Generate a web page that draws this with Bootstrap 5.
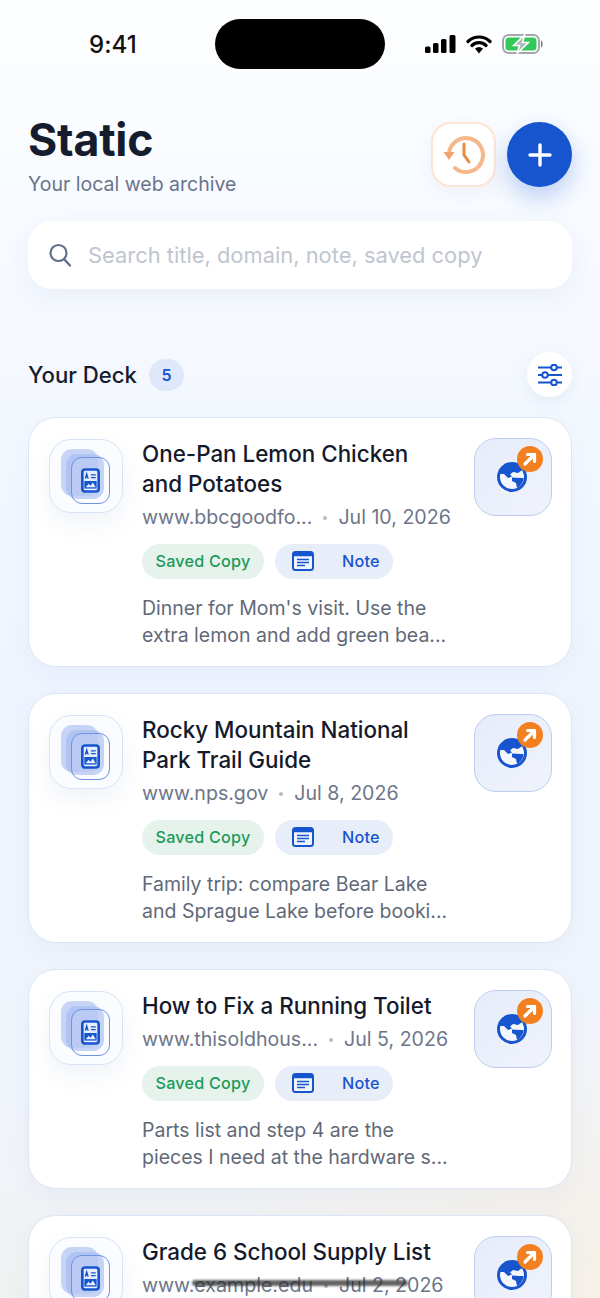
<!DOCTYPE html>
<html lang="en">
<head>
    <meta charset="UTF-8">
    <meta name="viewport" content="width=device-width, initial-scale=1.0">
    <title>Static</title>
    <link href="https://cdn.jsdelivr.net/npm/bootstrap@5.3.0/dist/css/bootstrap.min.css" rel="stylesheet">
    <style>
        html, body { height: 1298px; overflow: hidden; }
        body {
            font-family: Inter, "Liberation Sans", sans-serif;
            color: #141c2e;
            background:
                radial-gradient(420px 300px at 100% 100%, #f6f1e8 0%, rgba(246,241,232,0) 100%),
                linear-gradient(180deg, #fdfeff 0%, #f7faff 18%, #eef4fe 55%, #f0f4fb 85%, #f0f1f1 100%);
        }
        .status-row { height: 88px; padding: 19px 56px 0 89px; }
        .clock { width: 126px; font-size: 24px; font-weight: 500; color: #111; line-height: 51px; letter-spacing: .1px; }
        .island { width: 171px; height: 50px; background: #000; border-radius: 25px; }
        .status-icons { gap: 10px; margin-left: 40px; height: 50px; }
        .page-head { padding: 0 28px; height: 133px; }
        .app-title { font-size: 44.7px; font-weight: 700; line-height: 54px; margin: 25px 0 0; letter-spacing: -.2px; }
        .app-sub { font-size: 19.5px; color: #69748a; line-height: 28px; margin-top: 3px; }
        .head-actions { gap: 11px; margin-top: 34px; }
        .history-btn, .add-btn { width: 65px; height: 65px; padding: 0; }
        .history-btn { background: #fff; border: 2px solid #fbe6d6; border-radius: 20px; box-shadow: 0 6px 18px rgba(60,90,160,.06); }
        .add-btn { background: #1755cf; border: 0; border-radius: 50%; box-shadow: 0 10px 24px rgba(23,85,207,.28); }
        .search-box {
            margin: 0 28px; height: 68px; padding: 0 21px; gap: 17px; background: #fff;
            border-radius: 24px; box-shadow: 0 8px 24px rgba(70,100,170,.07);
        }
        .search-hint { font-size: 21.9px; color: #bfc5d0; }
        .deck-head { padding: 0 28px; margin-top: 63px; height: 45px; }
        .deck-title { font-size: 22.2px; font-weight: 500; margin: 2px 0 0; }
        .deck-count { width: 35px; height: 32px; margin-left: 12px; background: #dfe8fb; color: #1755cf; border-radius: 16px; font-size: 16px; font-weight: 600; }
        .filter-btn { width: 45px; height: 45px; padding: 0; background: #fff; border: 0; border-radius: 50%; box-shadow: 0 6px 16px rgba(70,100,170,.08); }
        .deck-list { padding: 0 28px; margin-top: 20px; gap: 26px; }
        .deck-card {
            flex-direction: row; align-items: flex-start; flex-shrink: 0; padding: 21px 19px 0 20px;
            border: 1.5px solid #dce5f6; border-radius: 28px; background: #fff;
            box-shadow: 0 8px 24px rgba(70,100,170,.05);
        }
        .card-tall { height: 250px; }
        .card-short { height: 220px; }
        .stack-tile {
            position: relative; width: 74px; height: 74px; flex-shrink: 0; background: #fbfcff;
            border: 1.5px solid #d9e2f6; border-radius: 22px; box-shadow: 0 10px 22px rgba(70,100,170,.08);
        }
        .sheet { position: absolute; border-radius: 11px; }
        .sheet-a { left: 11px; top: 9px; width: 37px; height: 47px; background: #c6d4f6; }
        .sheet-b { left: 16px; top: 14px; width: 38px; height: 45px; background: rgba(170,190,240,.75); }
        .sheet-c { left: 21px; top: 17px; width: 39px; height: 47px; border: 1.5px solid #6f93e4; background: rgba(255,255,255,.12); }
        .stack-tile svg { position: absolute; left: 31px; top: 28px; }
        .card-main { width: 312px; margin-left: 19px; margin-top: -.5px; flex-shrink: 0; }
        .item-title { font-size: 22.4px; font-weight: 500; line-height: 30px; margin: 0; color: #141a2b; }
        .item-meta { font-size: 19.6px; line-height: 28px; color: #6d7689; margin-top: 4px; white-space: nowrap; }
        .meta-dot { display: inline-block; width: 4px; height: 4px; border-radius: 50%; background: #b4bac6; margin: 0 11px; vertical-align: middle; }
        .chip-row { gap: 11px; margin-top: 13px; }
        .chip { height: 35px; border-radius: 18px; font-size: 16.2px; font-weight: 500; letter-spacing: .2px; }
        .chip-saved { width: 122px; background: #e5f3ec; color: #1c9a5a; }
        .chip-note { width: 118px; padding-left: 17px; gap: 28px; background: #e8edfa; color: #1755cf; }
        .item-note { font-size: 19.5px; line-height: 27px; color: #616978; margin: 16px 0 0; }
        .open-tile {
            position: relative; width: 78px; height: 78px; padding: 0; margin-left: auto; margin-top: -1px; flex-shrink: 0;
            background: linear-gradient(135deg, #e6ecfa, #f0f3fc); border: 1.5px solid #bccdf0; border-radius: 22px;
        }
        .open-tile .globe { position: absolute; left: 21px; top: 22px; }
        .open-badge { position: absolute; left: 42px; top: 7px; width: 26px; height: 26px; background: #f28020; border-radius: 50%; }
        .home-bar { position: absolute; left: 192px; top: 1280px; width: 216px; height: 6px; background: rgba(40,40,40,.72); border-radius: 3px; filter: blur(1px); }
    </style>
</head>
<body class="position-relative">

    <svg width="0" height="0" class="position-absolute">
        <symbol id="doc-icon" viewBox="0 0 20 26">
            <rect x="1.400" y="1.400" width="17.200" height="23.200" rx="2.800" fill="#e6edfd" stroke="#1755cf" stroke-width="2.800"/>
            <path d="M4.500 11 6 6 7.500 11M5 9.500h2M10.500 7h5M10.500 10h5" fill="none" stroke="#1755cf" stroke-width="1.400"/>
            <path d="M3.500 13.500h13v8h-13z" fill="#1755cf"/>
            <path d="M5 20l3-3.500 2 2 2.500-3.500 3 5z" fill="#e6edfd"/>
        </symbol>
        <symbol id="globe-icon" viewBox="0 0 32 32">
            <circle cx="16" cy="16" r="13.500" fill="#f4f6fd" stroke="#1755cf" stroke-width="3"/>
            <path d="M4 13C6 6 11 2.500 16 2.500c5 0 9 2 11 6L22 12l-5-1-3 2.500 2 2-4 1.500-4-4z" fill="#1755cf"/>
            <path d="M16 16.500l8 .5 3.500 0c0 4-3 8-6.500 10l-1-5-4-2z" fill="#1755cf"/>
        </symbol>
        <symbol id="arrow-icon" viewBox="0 0 26 26">
            <path d="M8 18 17.500 8.500M10.500 8.500h7v7" fill="none" stroke="#fff" stroke-width="3.200" stroke-linecap="round" stroke-linejoin="round"/>
        </symbol>
        <symbol id="note-icon" viewBox="0 0 22 20">
            <rect x="1" y="1" width="20" height="18" rx="2.500" fill="#f1f5fe" stroke="#1755cf" stroke-width="2"/>
            <path d="M1 3.500h20" stroke="#1755cf" stroke-width="3.500"/>
            <path d="M5 8.500h12M5 11.500h12M5 14.500h8" stroke="#1755cf" stroke-width="1.500"/>
        </symbol>
    </svg>

    <div class="status-row d-flex align-items-start">
        <div class="clock">9:41</div>
        <div class="island"></div>
        <div class="status-icons d-flex align-items-center">
            <svg width="31" height="18" viewBox="0 0 31 18"><rect x="0" y="11.500" width="5.500" height="6.500" rx="1.500"/><rect x="8" y="8" width="5.500" height="10" rx="1.500"/><rect x="16" y="4" width="5.500" height="14" rx="1.500"/><rect x="24.500" y="0" width="6" height="18" rx="1.500"/></svg>
            <svg width="26" height="20" viewBox="0 0 26 20"><path d="M2 7.500c6-6 16-6 22 0M6 11.500c4-3.800 10-3.800 14 0" fill="none" stroke="#000" stroke-width="3.200" stroke-linecap="round"/><path d="M9 14.500c2.500-2 5.500-2 8 0L13 19.500z"/></svg>
            <svg width="42" height="20" viewBox="0 0 42 20"><rect x="1" y="1" width="36" height="18" rx="5.500" fill="#fff" stroke="#a4a8ad" stroke-width="2"/><rect x="3.500" y="3.500" width="31" height="13" rx="3.500" fill="#34c759"/><path d="M39 6.500c2 .5 2.500 6.500 0 7z" fill="#7d8186"/><path d="M23 .5 11.500 11.500h6L15 19.500 26.500 8.500h-6z" fill="#b4b8bd" stroke="#fff" stroke-width="1.500"/></svg>
        </div>
    </div>

    <header class="page-head d-flex justify-content-between align-items-start">
        <div>
            <h1 class="app-title">Static</h1>
            <div class="app-sub">Your local web archive</div>
        </div>
        <div class="head-actions d-flex">
            <button class="btn history-btn d-flex align-items-center justify-content-center" type="button" aria-label="History">
                <svg width="44" height="44" viewBox="0 0 44 44" fill="none"><path d="M7 22a17 17 0 1 1 6 13" stroke="#f5b78b" stroke-width="4" stroke-linecap="round"/><path d="M1.500 19h11L7 27z" fill="#f2a36c"/><path d="M22 11v11l5 7" stroke="#e98a3e" stroke-width="3" stroke-linecap="round" stroke-linejoin="round"/></svg>
            </button>
            <button class="btn add-btn d-flex align-items-center justify-content-center" type="button" aria-label="Add">
                <svg width="24" height="24" viewBox="0 0 24 24"><path d="M12 2v20M2 12h20" stroke="#fff" stroke-width="3.400" stroke-linecap="round"/></svg>
            </button>
        </div>
    </header>

    <div class="search-box d-flex align-items-center">
        <svg width="22" height="24" viewBox="0 0 22 24" fill="none" class="flex-shrink-0"><circle cx="9.500" cy="10" r="8" stroke="#5f6f8c" stroke-width="2.200"/><path d="M15.500 16.500 21 22.500" stroke="#5f6f8c" stroke-width="2.400" stroke-linecap="round"/></svg>
        <span class="search-hint">Search title, domain, note, saved copy</span>
    </div>

    <div class="deck-head d-flex align-items-center">
        <h2 class="deck-title">Your Deck</h2>
        <span class="deck-count d-flex align-items-center justify-content-center">5</span>
        <button class="btn filter-btn d-flex align-items-center justify-content-center ms-auto" type="button" aria-label="Filter">
            <svg width="26" height="22" viewBox="0 0 26 22" fill="none" stroke="#1755cf" stroke-width="2"><path d="M1 3.500h24M1 11h24M1 18.500h24"/><circle cx="17" cy="3.500" r="2.800" fill="#fff"/><circle cx="8" cy="11" r="2.800" fill="#fff"/><circle cx="17" cy="18.500" r="2.800" fill="#fff"/></svg>
        </button>
    </div>

    <main class="deck-list d-flex flex-column">

        <article class="card deck-card card-tall">
            <div class="stack-tile"><i class="sheet sheet-a"></i><i class="sheet sheet-b"></i><i class="sheet sheet-c"></i><svg width="19" height="25"><use href="#doc-icon"/></svg></div>
            <div class="card-main">
                <h3 class="item-title">One-Pan Lemon Chicken and Potatoes</h3>
                <div class="item-meta">www.bbcgoodfo...<span class="meta-dot"></span>Jul 10, 2026</div>
                <div class="chip-row d-flex">
                    <span class="chip chip-saved d-flex align-items-center justify-content-center">Saved Copy</span>
                    <span class="chip chip-note d-flex align-items-center"><svg width="22" height="20"><use href="#note-icon"/></svg>Note</span>
                </div>
                <p class="item-note">Dinner for Mom's visit. Use the extra lemon and add green bea...</p>
            </div>
            <button class="btn open-tile" type="button" aria-label="Open"><svg class="globe" width="32" height="32"><use href="#globe-icon"/></svg><span class="open-badge d-flex align-items-center justify-content-center"><svg width="26" height="26"><use href="#arrow-icon"/></svg></span></button>
        </article>

        <article class="card deck-card card-tall">
            <div class="stack-tile"><i class="sheet sheet-a"></i><i class="sheet sheet-b"></i><i class="sheet sheet-c"></i><svg width="19" height="25"><use href="#doc-icon"/></svg></div>
            <div class="card-main">
                <h3 class="item-title">Rocky Mountain National Park Trail Guide</h3>
                <div class="item-meta">www.nps.gov<span class="meta-dot"></span>Jul 8, 2026</div>
                <div class="chip-row d-flex">
                    <span class="chip chip-saved d-flex align-items-center justify-content-center">Saved Copy</span>
                    <span class="chip chip-note d-flex align-items-center"><svg width="22" height="20"><use href="#note-icon"/></svg>Note</span>
                </div>
                <p class="item-note">Family trip: compare Bear Lake and Sprague Lake before booki...</p>
            </div>
            <button class="btn open-tile" type="button" aria-label="Open"><svg class="globe" width="32" height="32"><use href="#globe-icon"/></svg><span class="open-badge d-flex align-items-center justify-content-center"><svg width="26" height="26"><use href="#arrow-icon"/></svg></span></button>
        </article>

        <article class="card deck-card card-short">
            <div class="stack-tile"><i class="sheet sheet-a"></i><i class="sheet sheet-b"></i><i class="sheet sheet-c"></i><svg width="19" height="25"><use href="#doc-icon"/></svg></div>
            <div class="card-main">
                <h3 class="item-title">How to Fix a Running Toilet</h3>
                <div class="item-meta">www.thisoldhous...<span class="meta-dot"></span>Jul 5, 2026</div>
                <div class="chip-row d-flex">
                    <span class="chip chip-saved d-flex align-items-center justify-content-center">Saved Copy</span>
                    <span class="chip chip-note d-flex align-items-center"><svg width="22" height="20"><use href="#note-icon"/></svg>Note</span>
                </div>
                <p class="item-note">Parts list and step 4 are the pieces I need at the hardware s...</p>
            </div>
            <button class="btn open-tile" type="button" aria-label="Open"><svg class="globe" width="32" height="32"><use href="#globe-icon"/></svg><span class="open-badge d-flex align-items-center justify-content-center"><svg width="26" height="26"><use href="#arrow-icon"/></svg></span></button>
        </article>

        <article class="card deck-card card-short">
            <div class="stack-tile"><i class="sheet sheet-a"></i><i class="sheet sheet-b"></i><i class="sheet sheet-c"></i><svg width="19" height="25"><use href="#doc-icon"/></svg></div>
            <div class="card-main">
                <h3 class="item-title">Grade 6 School Supply List</h3>
                <div class="item-meta">www.example.edu<span class="meta-dot"></span>Jul 2, 2026</div>
            </div>
            <button class="btn open-tile" type="button" aria-label="Open"><svg class="globe" width="32" height="32"><use href="#globe-icon"/></svg><span class="open-badge d-flex align-items-center justify-content-center"><svg width="26" height="26"><use href="#arrow-icon"/></svg></span></button>
        </article>

    </main>

    <div class="home-bar"></div>

    <script src="https://cdn.jsdelivr.net/npm/bootstrap@5.3.0/dist/js/bootstrap.bundle.min.js"></script>
</body>
</html>
